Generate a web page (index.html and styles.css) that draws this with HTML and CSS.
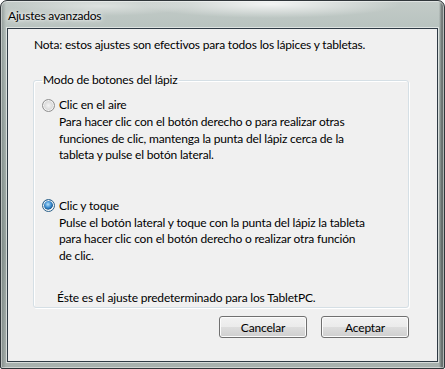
FILE: index.html
```html
<!DOCTYPE html>
<html lang="es">
<head>
<meta charset="utf-8">
<title>Ajustes avanzados</title>
<link rel="stylesheet" href="styles.css">
</head>
<body>
<div class="window">
  <div class="titlebar"><span class="title">Ajustes avanzados</span></div>
  <div class="client">
    <p class="note">Nota: estos ajustes son efectivos para todos los lápices y tabletas.</p>
    <fieldset class="group">
      <legend class="legend">Modo de botones del lápiz</legend>
      <div class="option">
        <div class="radio-row"><span class="radio"></span><span>Clic en el aire</span></div>
        <p class="desc">Para hacer clic con el botón derecho o para realizar otras<br>funciones de clic, mantenga la punta del lápiz cerca de la<br>tableta y pulse el botón lateral.</p>
      </div>
      <div class="option second">
        <div class="radio-row"><span class="radio checked"></span><span>Clic y toque</span></div>
        <p class="desc">Pulse el botón lateral y toque con la punta del lápiz la tableta<br>para hacer clic con el botón derecho o realizar otra función<br>de clic.</p>
      </div>
      <p class="default">Éste es el ajuste predeterminado para los TabletPC.</p>
    </fieldset>
    <div class="buttons">
      <button class="btn">Cancelar</button>
      <button class="btn">Aceptar</button>
    </div>
  </div>
</div>
</body>
</html>
```
FILE: styles.css
```css
html, body {
  margin: 0;
  padding: 0;
  background: #ffffff;
}
body {
  font-family: Lato, "Open Sans", sans-serif;
  font-size: 12px;
  letter-spacing: -0.18px;
  color: #000;
}
.window {
  box-sizing: border-box;
  width: 445px;
  height: 369px;
  border: 1px solid #30363a;
  border-radius: 7px 7px 2px 2px;
  background:
    radial-gradient(ellipse 130px 14px at 270px 3px, rgba(255,255,255,0.8), rgba(255,255,255,0) 100%),
    radial-gradient(ellipse 90px 10px at 100px 5px, rgba(255,255,255,0.45), rgba(255,255,255,0) 100%),
    linear-gradient(90deg, rgba(60,70,70,0.35) 0px, rgba(60,70,70,0) 5px, rgba(60,70,70,0) 438px, rgba(40,45,45,0.55) 441px, rgba(60,70,70,0.2) 445px),
    linear-gradient(180deg, #c3cbc8 0px, #b7c2be 30px, #a9b5b1 120px, #9aa6a2 250px, #a8b1ae 369px);
  box-shadow: inset 0 0 0 1px rgba(255,255,255,0.45);
  padding: 0 6px 6px 6px;
  display: flex;
  flex-direction: column;
  overflow: hidden;
}
.titlebar {
  height: 27px;
  display: flex;
  align-items: center;
  padding-left: 1px;
}
.title {
  font-size: 12px;
  color: #000;
  text-shadow: 0 0 6px #fff, 0 0 3px #fff;
  margin-top: 2px;
}
.client {
  flex: 1;
  border: 1px solid #2e3a44;
  box-shadow: 0 0 0 1px rgba(255,255,255,0.55);
  background: #f0f0f0;
  display: flex;
  flex-direction: column;
  padding: 0 28px 0 25px;
}
.note {
  margin: 8px 0 0 1px;
  line-height: 16px;
}
.group {
  margin: 19px 0 0 0;
  padding: 0 0 0 8px;
  border: 1px solid #d5dfe5;
  border-radius: 3px;
  box-shadow: inset 1px 1px 0 #fff, 1px 1px 0 #fff;
  height: 236px;
  box-sizing: border-box;
  min-width: 0;
}
.legend {
  padding: 0 1px;
  margin-left: 0;
  line-height: 16px;
}
.option {
  margin-top: 9px;
}
.option.second {
  margin-top: 34px;
}
.radio-row {
  display: flex;
  align-items: center;
  gap: 4px;
  line-height: 16px;
}
.radio {
  box-sizing: border-box;
  width: 13px;
  height: 13px;
  border-radius: 50%;
  border: 1px solid #8f8f8f;
  background: radial-gradient(circle at 50% 50%, #f4f4f4 0, #d9d9d9 55%, #c8c8c8 75%, #ececec 100%);
  box-shadow: inset 0 0 0 1px #f4f4f4;
  flex: none;
}
.radio.checked {
  border-color: #2c628b;
  background: radial-gradient(circle at 45% 40%, #b6e1fb 0, #3f8fd2 35%, #1b5c95 55%, #f4f4f4 62%, #dcdcdc 100%);
}
.desc {
  margin: 1px 0 0 17px;
  line-height: 16.5px;
  white-space: nowrap;
}
.default {
  margin: 26px 0 0 15px;
  line-height: 16px;
  white-space: nowrap;
}
.buttons {
  display: flex;
  justify-content: flex-end;
  gap: 14px;
  margin-top: 8px;
}
.btn {
  font-family: inherit;
  font-size: 12px;
  letter-spacing: inherit;
  width: 88px;
  height: 22px;
  border: 1px solid #707070;
  border-radius: 3px;
  background: linear-gradient(180deg, #f2f2f2 0%, #ebebeb 50%, #dddddd 51%, #cfcfcf 100%);
  box-shadow: inset 0 0 0 1px #fcfcfc;
  color: #000;
  padding: 0;
}
```
